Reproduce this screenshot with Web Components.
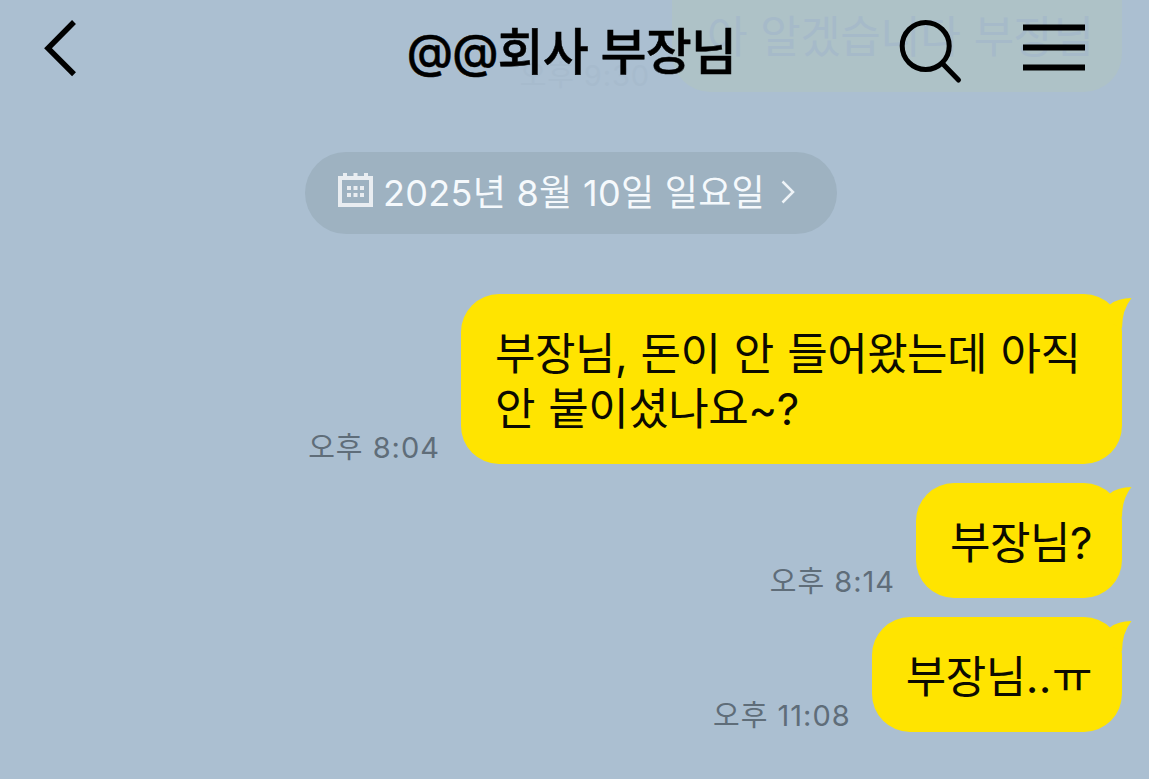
<!DOCTYPE html>
<html lang="ko">
<head>
<meta charset="utf-8">
<title>@@회사 부장님</title>
<style>
  body {
    margin: 0;
    overflow: hidden;
    background: #abbfd1;
    font-family: Inter, "Noto Sans CJK KR", sans-serif;
  }

  .at {
    font-size: 47px;
    line-height: 1;
    vertical-align: 2px;
  }

  .dots {
    letter-spacing: 0.5px;
  }
</style>
</head>
<body>
<chat-room>
  <chat-header slot="header"><span class="at">@@</span>회사 부장님</chat-header>
  <date-chip>2025년 8월 10일 일요일</date-chip>
  <chat-message time="오후 8:04">부장님, 돈이 안 들어왔는데 아직 안 붙이셨나요~?</chat-message>
  <chat-message time="오후 8:14">부장님?</chat-message>
  <chat-message time="오후 11:08">부장님<span class="dots">..</span>ㅠ</chat-message>
</chat-room>

<script>
class ChatRoom extends HTMLElement {
  constructor() {
    super();
    this.attachShadow({ mode: 'open' }).innerHTML = `
    <style>
      :host {
        display: flex;
        flex-direction: column;
        width: 1149px;
        height: 779px;
        overflow: hidden;
        background: #abbfd1;
      }

      .messages {
        display: flex;
        flex-direction: column;
        gap: 19px;
        padding: 52px 27px 0 0;
      }
    </style>
    <slot name="header"></slot>
    <div class="messages"><slot></slot></div>`;
  }
}

class ChatHeader extends HTMLElement {
  constructor() {
    super();
    this.attachShadow({ mode: 'open' }).innerHTML = `
    <style>
      :host {
        display: flex;
        position: relative;
        height: 100px;
        flex: none;
        color: #000;
      }

      .bar {
        position: relative;
        display: grid;
        grid-template-columns: 1fr auto 1fr;
        width: 100%;
        height: 100px;
        box-sizing: border-box;
        padding: 0 64px 0 42px;
      }

      h1 {
        margin: 0 0 0 16px;
        padding-top: 20px;
        font-size: 50px;
        font-weight: 500;
        line-height: 64px;
        letter-spacing: -0.8px;
        white-space: nowrap;
        -webkit-text-stroke: 0.5px #000;
      }

      svg {
        display: block;
        fill: none;
        stroke: #000;
      }

      .back {
        padding-top: 18px;
      }

      .tools {
        display: flex;
        justify-content: flex-end;
        gap: 60px;
        padding-top: 18px;
      }

      /* message scrolled under the translucent bar */
      .under {
        position: absolute;
        top: 0;
        right: 27px;
        height: 92px;
        display: flex;
        align-items: flex-end;
        gap: 22px;
      }

      .under p {
        margin: 0;
        width: 450px;
        height: 92px;
        box-sizing: border-box;
        padding: 10px 0 0 35px;
        border-radius: 0 0 38px 38px;
        background: #aec2c7;
        color: #a6bac9;
        font-size: 44px;
        line-height: 54px;
        letter-spacing: -0.5px;
        word-spacing: 1.5px;
        white-space: nowrap;
      }

      .under time {
        color: #a7bbcd;
        font-size: 29px;
        line-height: 33px;
        letter-spacing: 0.9px;
      }
    </style>
    <div class="under"><time>오후 9:30</time><p>아 알겠습니다 부장님</p></div>
    <div class="bar">
      <div class="back">
        <svg width="36" height="60" viewBox="0 0 36 60"><path d="M32 4 6 30.300l26 26" stroke-width="5.500"/></svg>
      </div>
      <h1><slot></slot></h1>
      <div class="tools">
        <svg width="64" height="66" viewBox="0 0 64 66">
          <circle cx="26.700" cy="28" r="23.500" stroke-width="5"/>
          <path d="m43.500 45.500 16 16.500" stroke-width="5" stroke-linecap="round"/>
        </svg>
        <svg width="62" height="54" viewBox="0 0 62 54"><path d="M0 9.500h62M0 29.500h62M0 49.500h62" stroke-width="6"/></svg>
      </div>
    </div>`;
  }
}

class DateChip extends HTMLElement {
  constructor() {
    super();
    this.attachShadow({ mode: 'open' }).innerHTML = `
    <style>
      :host {
        display: flex;
        align-items: center;
        width: 532px;
        height: 82px;
        box-sizing: border-box;
        margin: 0 0 41px 305px;
        padding: 0 42px 0 33px;
        border-radius: 41px;
        background: #9eb2c1;
        color: #f5f9fc;
        font-size: 36px;
        line-height: 50px;
        letter-spacing: 0.3px;
        white-space: nowrap;
      }

      svg {
        flex: none;
      }

      .calendar {
        margin-bottom: 5px;
      }

      .arrow {
        margin-bottom: 2px;
      }

      .label {
        flex: 1;
        margin-left: 10px;
      }
    </style>
    <svg class="calendar" width="35" height="35" viewBox="0 0 35 35" fill="#e9edf1">
      <path fill-rule="evenodd" d="M0 3h35v31H0zM4 7v23h27V7z"/>
      <path d="M5 0h4v4H5zM15.500 0h4v4h-4zM26 0h4v4h-4z"/>
      <path d="M9 13h4v4H9zM15.500 13h4v4h-4zM22 13h4v4h-4zM9 20h4v4H9zM15.500 20h4v4h-4zM22 20h4v4h-4z"/>
    </svg>
    <span class="label"><slot></slot></span>
    <svg class="arrow" width="14" height="24" viewBox="0 0 14 24" fill="none" stroke="#eef3f7" stroke-width="2.500"><path d="m1.500 1.500 10.500 10.500L1.500 22.500"/></svg>`;
  }
}

class ChatMessage extends HTMLElement {
  constructor() {
    super();
    this.attachShadow({ mode: 'open' });
  }

  connectedCallback() {
    this.shadowRoot.innerHTML = `
    <style>
      :host {
        display: flex;
        justify-content: flex-end;
        align-items: flex-end;
        gap: 21px;
      }

      time {
        color: #5f6d79;
        font-size: 29px;
        line-height: 33px;
        letter-spacing: 1px;
        white-space: nowrap;
      }

      .bubble {
        position: relative;
        box-sizing: border-box;
        max-width: 661px;
        padding: 33px 30px 27px 34px;
        border-radius: 38px;
        background: #ffe400;
        color: #0c0b00;
        font-size: 44px;
        line-height: 55px;
        letter-spacing: -0.5px;
        word-spacing: 1.5px;
        word-break: keep-all;
      }

      .tail {
        position: absolute;
        top: 0;
        right: -10px;
        fill: #ffe400;
      }
    </style>
    <time>${this.getAttribute('time')}</time>
    <div class="bubble">
      <slot></slot>
      <svg class="tail" width="32" height="40" viewBox="0 0 32 40"><path d="M10 10.500Q18 4 31.500 4 22 16 22 34L8 28z"/></svg>
    </div>`;
  }
}

customElements.define('chat-room', ChatRoom);
customElements.define('chat-header', ChatHeader);
customElements.define('date-chip', DateChip);
customElements.define('chat-message', ChatMessage);
</script>
</body>
</html>
